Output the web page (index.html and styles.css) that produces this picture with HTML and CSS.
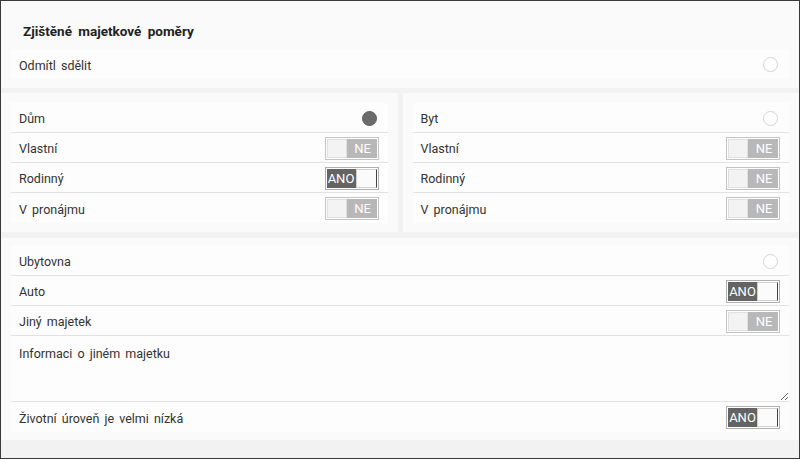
FILE: index.html
```html
<!DOCTYPE html>
<html lang="cs">
<head>
<meta charset="utf-8">
<title>Zjištěné majetkové poměry</title>
<link rel="stylesheet" href="styles.css">
</head>
<body>
<div class="frame">
  <section class="card card-top">
    <h1 class="title">Zjištěné majetkové poměry</h1>
    <div class="row row-last">
      <span class="label">Odmítl sdělit</span>
      <span class="radio"></span>
    </div>
  </section>

  <div class="cols">
    <section class="card card-col">
      <div class="row">
        <span class="label">Dům</span>
        <span class="radio radio-on"></span>
      </div>
      <div class="row">
        <span class="label">Vlastní</span>
        <span class="toggle"><span class="knob"></span><span class="tval">NE</span></span>
      </div>
      <div class="row">
        <span class="label">Rodinný</span>
        <span class="toggle toggle-on"><span class="tval">ANO</span><span class="knob"></span></span>
      </div>
      <div class="row row-last">
        <span class="label">V pronájmu</span>
        <span class="toggle"><span class="knob"></span><span class="tval">NE</span></span>
      </div>
    </section>
    <section class="card card-col">
      <div class="row">
        <span class="label">Byt</span>
        <span class="radio"></span>
      </div>
      <div class="row">
        <span class="label">Vlastní</span>
        <span class="toggle"><span class="knob"></span><span class="tval">NE</span></span>
      </div>
      <div class="row">
        <span class="label">Rodinný</span>
        <span class="toggle"><span class="knob"></span><span class="tval">NE</span></span>
      </div>
      <div class="row row-last">
        <span class="label">V pronájmu</span>
        <span class="toggle"><span class="knob"></span><span class="tval">NE</span></span>
      </div>
    </section>
  </div>

  <section class="card card-bottom">
    <div class="row">
      <span class="label">Ubytovna</span>
      <span class="radio"></span>
    </div>
    <div class="row">
      <span class="label">Auto</span>
      <span class="toggle toggle-on"><span class="tval">ANO</span><span class="knob"></span></span>
    </div>
    <div class="row">
      <span class="label">Jiný majetek</span>
      <span class="toggle"><span class="knob"></span><span class="tval">NE</span></span>
    </div>
    <div class="row row-area">
      <textarea class="area" placeholder="Informaci o jiném majetku"></textarea>
    </div>
    <div class="row row-last">
      <span class="label">Životní úroveň je velmi nízká</span>
      <span class="toggle toggle-on"><span class="tval">ANO</span><span class="knob"></span></span>
    </div>
  </section>
</div>
</body>
</html>
```

FILE: styles.css
```css
* { box-sizing: border-box; }
html, body { margin: 0; padding: 0; }
body {
  font-family: Roboto, "Noto Sans", Arial, sans-serif;
  color: #333;
  background: #f2f2f2;
}
.frame {
  width: 800px;
  height: 459px;
  border: 1px solid #3a3a3a;
  background: #f2f2f2;
  overflow: hidden;
  display: flex;
  flex-direction: column;
}
.card {
  background: #fafafa;
  padding: 10px 10px 10px;
}
.card-top {
  padding: 0 10px 9px;
}
.title {
  margin: 0;
  height: 48px;
  padding: 21px 0 0 12px;
  font-size: 13.5px;
  font-weight: bold;
  color: #222;
  word-spacing: 3px;
  line-height: 18px;
}
.cols {
  display: grid;
  grid-template-columns: 1fr 1fr;
  column-gap: 5px;
  margin-top: 5px;
}
.card-col {
  padding: 10px 10px 9px;
}
.card-bottom {
  margin-top: 6px;
  padding: 8px 10px 8px;
}
.row {
  height: 30px;
  background: #fdfdfd;
  border-bottom: 1px solid #e2e2e2;
  display: flex;
  align-items: center;
  justify-content: space-between;
  padding: 1px 9px 0 8px;
}
.row-last { border-bottom: none; height: 30px; }
.label {
  font-size: 12.5px;
  word-spacing: 2px;
  color: #333;
  padding-top: 1px;
}
.radio {
  width: 15px;
  height: 15px;
  border-radius: 50%;
  border: 1px solid #d4d4d4;
  background: #fff;
  margin-right: 2px;
}
.radio-on {
  background: #6b6b6b;
  border-color: #5e5e5e;
}
.toggle {
  width: 54px;
  height: 23px;
  border: 1px solid #c4c4c4;
  padding: 1px;
  display: flex;
  background: #fff;
}
.toggle .knob {
  width: 20px;
  background: #f3f3f3;
  border: 1px solid #e0e0e0;
}
.toggle .tval {
  flex: 1;
  background: #b8b8b8;
  color: #fff;
  font-size: 13px;
  display: flex;
  align-items: center;
  justify-content: center;
  padding-left: 2px;
}
.toggle-on {
  border-color: #b0b0b0;
}
.toggle-on .tval {
  background: #646464;
  padding-left: 0;
  flex: 0 0 29px;
}
.toggle-on .knob {
  flex: 1;
  width: auto;
  background: #fbfbfb;
  border: 1px solid #d0d0d0;
  border-right: 1px solid #444;
}
.row-area {
  height: 66px;
  padding: 0;
  align-items: stretch;
}
.area {
  width: 100%;
  height: 100%;
  border: none;
  background: #fdfdfd;
  resize: vertical;
  padding: 10px 8px;
  font-family: Roboto, "Noto Sans", Arial, sans-serif;
  font-size: 12.5px;
  word-spacing: 2px;
  outline: none;
}
.area::placeholder { color: #333; opacity: 1; }
```
